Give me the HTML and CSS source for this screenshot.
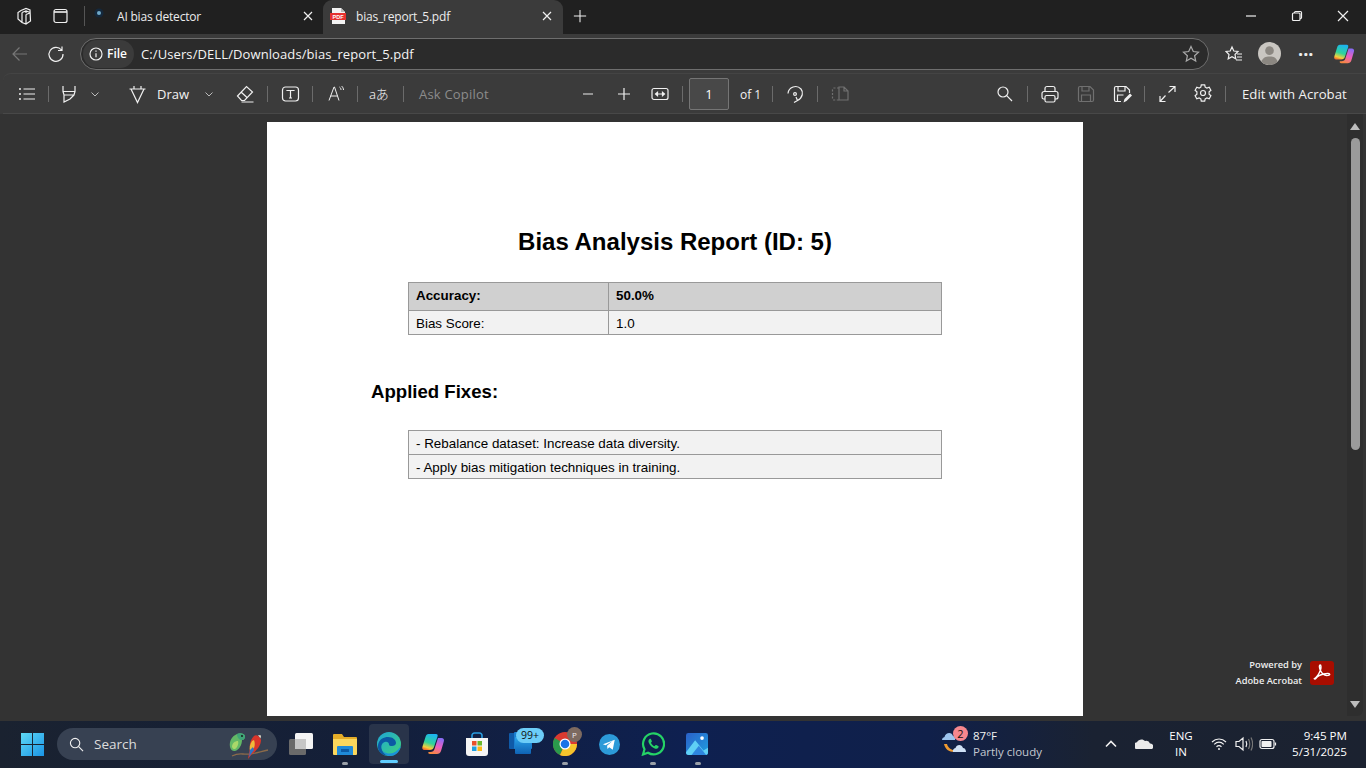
FILE: index.html
```html
<!DOCTYPE html>
<html lang="en">
<head>
<meta charset="utf-8">
<title>bias_report_5.pdf</title>
<link rel="stylesheet" href="styles.css">
</head>
<body>
<svg class="defs" width="0" height="0" aria-hidden="true">
  <defs>
    <linearGradient id="cpA" x1="0.6" y1="0" x2="0.3" y2="1"><stop offset="0" stop-color="#1cb4f0"/><stop offset=".55" stop-color="#2fd49a"/><stop offset=".85" stop-color="#f4d03c"/><stop offset="1" stop-color="#f2702f"/></linearGradient>
    <linearGradient id="cpB" x1="0.7" y1="0" x2="0.3" y2="1"><stop offset="0" stop-color="#8a6cf5"/><stop offset=".5" stop-color="#ee5fc0"/><stop offset="1" stop-color="#f6893c"/></linearGradient>
    <linearGradient id="win" x1="0" y1="0" x2="1" y2="1"><stop offset="0" stop-color="#5fd9f5"/><stop offset="1" stop-color="#1a94e6"/></linearGradient>
    <linearGradient id="edg" x1="0" y1="0" x2="1" y2="1"><stop offset="0" stop-color="#1ea6d8"/><stop offset="1" stop-color="#3fd27a"/></linearGradient>
    <linearGradient id="pho" x1="0" y1="0" x2="1" y2="1"><stop offset="0" stop-color="#2a60c8"/><stop offset="1" stop-color="#1f9fe0"/></linearGradient>
    <linearGradient id="olk" x1="0" y1="0" x2="0" y2="1"><stop offset="0" stop-color="#2aa4ea"/><stop offset="1" stop-color="#0f62b4"/></linearGradient>
    <symbol id="copilot" viewBox="0 0 24 24">
      <path d="M7.500 2H15c1.500 0 2 1 1.500 2.500L13 15c-.6 1.800-2 3-4 3H3.500C1.500 18 .8 16.500 1.500 14.500L4.500 5C5 3 6 2 7.500 2z" fill="url(#cpA)"/>
      <path d="M17 6h3.500c2 0 3 1.500 2.300 3.500L20 19c-.6 2-2 3-4 3H9c-1.500 0-2-1-1.500-2h2c2 0 3.500-1 4-3L17 6z" fill="url(#cpB)"/>
    </symbol>
  </defs>
</svg>

<div class="tabstrip">
  <svg class="ico tabs-ico" viewBox="0 0 20 20"><path d="M6 4.500 11 2.500 15 4 15.500 15 11 18 7 16.500 3 13V6.500z M7 6.500 11 5 15 6.500 M7 6.500V16.500 M11 5V7 M11 8.500 15 7 M11 8.500V18"/></svg>
  <svg class="ico tab-panel" viewBox="0 0 20 20"><rect x="3" y="3.500" width="13" height="13" rx="2"/><path class="thick" d="M3 6h13"/></svg>
  <span class="tab-sep"></span>
  <div class="tab">
    <svg class="favicon" viewBox="0 0 12 12"><circle cx="5" cy="5" r="4.500" fill="#14283c"/><circle cx="5" cy="5" r="2" fill="#6fa8c8"/></svg>
    <span class="tab-title">AI bias detector</span>
    <svg class="ico tab-x" viewBox="0 0 12 12"><path d="M2 2l8 8M10 2l-8 8"/></svg>
  </div>
  <div class="tab tab-active">
    <svg class="favicon-pdf" viewBox="0 0 16 16"><path d="M2 0h9l4 4v12H2z" fill="#f4f4f4"/><path d="M11 0l4 4h-4z" fill="#bbb"/><rect x="0" y="5" width="16" height="7" fill="#e5312f"/><text x="8" y="11" class="pdf-mini">PDF</text></svg>
    <span class="tab-title">bias_report_5.pdf</span>
    <svg class="ico tab-x" viewBox="0 0 12 12"><path d="M2 2l8 8M10 2l-8 8"/></svg>
  </div>
  <svg class="ico tab-plus" viewBox="0 0 16 16"><path d="M8 1v14M1 8h14"/></svg>
  <div class="win-controls">
    <svg class="ico" viewBox="0 0 12 12"><path d="M1 6h10"/></svg>
    <svg class="ico" viewBox="0 0 12 12"><rect x="1.500" y="3" width="7.500" height="7.500" rx="1"/><path d="M3.500 3V2.500c0-.6.4-1 1-1h5c.6 0 1 .4 1 1v5c0 .6-.4 1-1 1H9"/></svg>
    <svg class="ico" viewBox="0 0 12 12"><path d="M1 1l10 10M11 1 1 11"/></svg>
  </div>
</div>

<div class="addressrow">
  <svg class="ico back" viewBox="0 0 18 18"><path d="M16 9H2M8.500 2.500 2 9l6.500 6.500"/></svg>
  <svg class="ico reload" viewBox="0 0 18 18"><path d="M14.500 5A7 7 0 1 0 16 9M15 1.500V5.500H11"/></svg>
  <div class="omnibox">
    <div class="chip">
      <svg class="ico info" viewBox="0 0 14 14"><circle cx="7" cy="7" r="6"/><path d="M7 6.200v4M7 3.500v1.300"/></svg>
      <span class="chip-text">File</span>
    </div>
    <span class="url">C:/Users/DELL/Downloads/bias_report_5.pdf</span>
    <svg class="ico star" viewBox="0 0 18 18"><path d="M9 1.500l2.300 5 5.200.6-3.900 3.600 1.100 5.300L9 13.300 4.300 16l1.100-5.300L1.500 7.100l5.200-.6z"/></svg>
  </div>
  <svg class="ico favs" viewBox="0 0 18 18"><path d="M7 2l1.800 4 4.200.5-3 3 .8 4.300L7 11.700 3.200 13.800 4 9.500 1 6.500 5.200 6zM12 9h5M12 12h5M11 15h6"/></svg>
  <svg class="avatar" viewBox="0 0 24 24"><circle cx="12" cy="12" r="12" fill="#c9c6c1"/><circle cx="12" cy="9" r="4.500" fill="#8b8781"/><path d="M3.500 20.500C5 16 8 15 12 15s7 1 8.500 5.500A12 12 0 0 1 3.500 20.500z" fill="#8b8781"/></svg>
  <span class="more">···</span>
  <svg class="cp-top"><use href="#copilot"/></svg>
</div>

<div class="toolbar-wrap">
<div class="toolbar">
  <svg class="ico ti" viewBox="0 0 20 20"><path d="M6.500 5H18M6.500 10H18M6.500 15H18"/><path class="thick" d="M2 5h2M2 10h2M2 15h2"/></svg>
  <span class="sep m11"></span>
  <svg class="ico ti m10" viewBox="0 0 20 20"><path d="M4 2v5.500h12V2M4 7.500 5 11h10l1-3.500M5 11v7l6-3 4-4"/></svg>
  <svg class="ico chev m11" viewBox="0 0 10 10"><path d="M1.500 3.500 5 7l3.500-3.500"/></svg>
  <svg class="ico ti m27" viewBox="0 0 20 20"><path d="M2.500 5h16M4 5l6.500 13.500L17 5M7 5V2M14 5V2"/></svg>
  <span class="tb-text draw m10">Draw</span>
  <svg class="ico chev m15" viewBox="0 0 10 10"><path d="M1.500 3.500 5 7l3.500-3.500"/></svg>
  <svg class="ico ti m21" viewBox="0 0 20 20"><path d="M2.500 12 11.500 2.500l6 5.500-8 8.500H6.500zM6 8l6 5.500M6.500 18h12"/></svg>
  <span class="sep m12"></span>
  <svg class="ico ti m12" viewBox="0 0 20 20"><rect x="2.500" y="3" width="16" height="14" rx="3"/><path d="M7 7V6.500h7V7M10.500 6.500v7.500M9 14h3"/></svg>
  <span class="sep m12"></span>
  <svg class="ico ti m12 read" viewBox="0 0 20 20"><path d="M4 16.500 9 3h.5l4.500 13.500M5.500 12h7M14.500 3c1 .8 1.500 1.800 1.500 3M16.500 2c1.200 1 2 2.400 2 4"/></svg>
  <span class="sep m12"></span>
  <span class="tb-text trans m11">aあ</span>
  <span class="sep m14"></span>
  <span class="tb-text ask m15">Ask Copilot</span>
  <svg class="ico ti m87 dim-line" viewBox="0 0 20 20"><path d="M5 10h10"/></svg>
  <svg class="ico ti m16" viewBox="0 0 20 20"><path d="M10 4v12M4 10h12"/></svg>
  <svg class="ico ti m16" viewBox="0 0 20 20"><rect x="2" y="4.500" width="16" height="11" rx="2"/><path d="M5 10h10M5.500 10l2-1.700v3.400zM14.500 10l-2-1.700v3.400z"/></svg>
  <span class="sep m12"></span>
  <div class="pagebox m6">1</div>
  <span class="tb-text of1 m11">of 1</span>
  <span class="sep m12"></span>
  <svg class="ico ti m12" viewBox="0 0 20 20"><path d="M3 9.500A7.500 7.500 0 0 1 16 5c2.500 3 2 8.500-3.500 11.500M9 18.500l3.500-2-1.500-3.500"/><circle cx="10" cy="10" r="1.400"/></svg>
  <span class="sep m12"></span>
  <svg class="ico ti m12 dim" viewBox="0 0 20 20"><path stroke-dasharray="2 1.500" d="M9 4H4a1.500 1.500 0 0 0-1.500 1.500v9A1.500 1.500 0 0 0 4 16h5"/><path d="M9 3h5l4 4v9H9zM14 3v4h4"/></svg>

  <svg class="ico ti right" viewBox="0 0 20 20"><circle cx="8" cy="8" r="5"/><path d="M11.700 11.700 17 17"/></svg>
  <span class="sep m12"></span>
  <svg class="ico ti m12" viewBox="0 0 20 20"><path d="M5 8V4.500A2 2 0 0 1 7 2.500h6a2 2 0 0 1 2 2V8M5 15H3.500A2 2 0 0 1 2 13V9.500a2 2 0 0 1 2-2h12a2 2 0 0 1 2 2V13a2 2 0 0 1-2 2H15"/><rect x="5" y="11.500" width="10" height="6.500" rx="1.500"/></svg>
  <svg class="ico ti m16 dim" viewBox="0 0 20 20"><path d="M2.500 4A1.500 1.500 0 0 1 4 2.500h10L17.500 6v10a1.500 1.500 0 0 1-1.500 1.500H4A1.500 1.500 0 0 1 2.500 16zM6 2.500V7h7V2.500M5.500 17.500V11h9v6.500"/></svg>
  <svg class="ico ti m16" viewBox="0 0 20 20"><path d="M9 17.500H4A1.500 1.500 0 0 1 2.500 16V4A1.500 1.500 0 0 1 4 2.500h10L17.500 6v3M6 2.500V7h7V2.500M5.500 17v-6h6"/><path class="solid" d="M11.500 18.500l1-3.500 5.500-5.500 2 2-5.500 5.500z"/></svg>
  <span class="sep m12"></span>
  <svg class="ico ti m12" viewBox="0 0 20 20"><path d="M11.500 8.500 18 2.500M12.500 2.500H18V8M8.500 11.500 3 17.500M3 12v5.500H8.500"/></svg>
  <svg class="ico ti m16 gear" viewBox="0 0 20 20"><path d="M8.300 1.800h3.400l.5 2.400 1.700.9 2.300-.8 1.700 3-1.800 1.500v2.400l1.800 1.500-1.700 3-2.300-.8-1.700.9-.5 2.400H8.300l-.5-2.400-1.700-.9-2.300.8-1.700-3 1.800-1.500V8.800L2.100 7.300l1.700-3 2.300.8 1.700-.9z"/><circle cx="10" cy="10" r="2.500"/></svg>
  <span class="sep m12"></span>
  <span class="tb-text edit m16">Edit with Acrobat</span>
</div>
</div>

<div class="viewer">
  <div class="canvas">
    <div class="page">
      <h1 class="title">Bias Analysis Report (ID: 5)</h1>
      <table class="grid">
        <tr class="head"><td class="c1">Accuracy:</td><td>50.0%</td></tr>
        <tr class="row2"><td class="c1">Bias Score:</td><td>1.0</td></tr>
      </table>
      <h2 class="subtitle">Applied Fixes:</h2>
      <table class="grid fixes">
        <tr><td>- Rebalance dataset: Increase data diversity.</td></tr>
        <tr><td>- Apply bias mitigation techniques in training.</td></tr>
      </table>
    </div>
  </div>
  <div class="scrollbar">
    <span class="arrow-up"></span>
    <span class="thumb"></span>
    <span class="arrow-down"></span>
  </div>
  <div class="powered">
    <div class="powered-text"><span>Powered by</span><span>Adobe Acrobat</span></div>
    <svg class="acro" viewBox="0 0 24 24"><rect width="24" height="24" rx="3" fill="#a80d00"/><path d="M4 18c2.500-1.500 5-5 6.500-9 .7-2 .7-5-.3-5-1.100 0-1 2.600 0 5 1.500 3.300 4 5.500 6.500 5.500 2 0 3.300-.5 3-1.300-.4-.9-3-.9-6-.2-3 .7-6 2-7.500 4-1 1.300-2 1.500-2 .2" fill="none" stroke="#fff" stroke-width="1.400"/></svg>
  </div>
</div>

<div class="taskbar">
  <svg class="start" viewBox="0 0 24 24"><path fill="url(#win)" d="M0 0h11.500v11.500H0zM12.500 0H24v11.500H12.500zM0 12.500h11.500V24H0zM12.500 12.500H24V24H12.500z"/></svg>
  <div class="search">
    <svg class="ico search-ico" viewBox="0 0 16 16"><circle cx="6.500" cy="6.500" r="5"/><path d="M10.300 10.300 15 15"/></svg>
    <span class="search-text">Search</span>
    <svg class="parrots" viewBox="0 0 42 32">
      <path d="M4 28C12 24 14 27 22 26c6-.5 12-3 18-4" stroke="#8a6a4a" stroke-width="1.300" fill="none"/>
      <path d="M2 19C1 13 4 8 9 6c3-1.500 7-1 8 2 .3 2-1 4-3 4 0 5-3 10-7 11-2.500.3-4.500-1.500-5-4z" fill="#62b866"/>
      <path d="M4 19c0-4 3-6 6-6 1 3-1 7-3 8-1.500.3-2.500-.5-3-2z" fill="#a9d86a"/>
      <path d="M9 6c3-1.500 7-1 8 2 .3 2-1 4-3 4-2 .5-5-2-5-6z" fill="#3fa578"/>
      <circle cx="14" cy="8" r=".9" fill="#111"/>
      <path d="M26 8c-3 3-5 8-4 12l-2 11 4-5c4-3 9-8 9-14-1-4-5-6-7-4z" fill="#d8352a"/>
      <path d="M24 13c-2 3-3 7-2 10l4-3c1-3 1-5 0-8z" fill="#f0b93a"/>
      <path d="M22 22l3-3 1 3-5 7z" fill="#2a74c8"/>
      <path d="M30 7l3 .5-.5 3z" fill="#e9e2d0"/>
    </svg>
  </div>
  <svg class="tk taskview" viewBox="0 0 24 24"><rect x="6" y="1" width="18" height="16" rx="1.500" fill="#f4f4f4"/><rect x="0" y="7" width="17" height="16" rx="1.500" fill="#6a6a6a"/><rect x="6" y="7" width="11" height="10" fill="#c6c6c6"/></svg>
  <div class="tkitem explorer">
    <svg class="tk" viewBox="0 0 24 24"><path d="M0 3a1 1 0 0 1 1-1h8l2 3h12a1 1 0 0 1 1 1v16H0z" fill="#e5ad28"/><path d="M0 7h24v15a1 1 0 0 1-1 1H1a1 1 0 0 1-1-1z" fill="#fbd75c"/><path d="M5 14h14a1 1 0 0 1 1 1v8H4v-8a1 1 0 0 1 1-1z" fill="#1f8ad8"/><rect x="8" y="17" width="8" height="3" fill="#0c5ba6"/></svg>
    <span class="dot"></span>
  </div>
  <div class="tkitem edge">
    <svg class="tk" viewBox="0 0 24 24"><circle cx="12" cy="12" r="12" fill="url(#edg)"/><path d="M1 13C2 7 7 5 11 5c5 0 8 3 8 6 0 2-2 3-4 3-1.500 0-3-.5-3-1.500 0-2-2-3-4-2.500-3 .7-4 3.500-3.500 6.500.5 3 3 6 6.500 7C5 24 0 19 1 13z" fill="#0c59a4"/><path d="M24 14c-1 5-5 10-11 10-3 0-6-2-7-5 2 2 4 2.500 7 2.500 4 0 8-3 11-7.500z" fill="#1a92d8"/></svg>
    <span class="dot active"></span>
  </div>
  <svg class="tk copilot"><use href="#copilot"/></svg>
  <svg class="tk store" viewBox="0 0 24 24"><path d="M7 6V3.500A2.500 2.500 0 0 1 9.500 1h5A2.500 2.500 0 0 1 17 3.500V6" fill="none" stroke="#2a9de0" stroke-width="1.600"/><path d="M1 6h22v15a3 3 0 0 1-3 3H4a3 3 0 0 1-3-3z" fill="#f5f5f5"/><rect x="7" y="9" width="4.500" height="4.500" fill="#e8502c"/><rect x="12.500" y="9" width="4.500" height="4.500" fill="#6bb82c"/><rect x="7" y="14.500" width="4.500" height="4.500" fill="#1e9fe0"/><rect x="12.500" y="14.500" width="4.500" height="4.500" fill="#fdb814"/></svg>
  <div class="outlook">
    <svg class="tk" viewBox="0 0 24 24"><rect x="0" y="1" width="9" height="16" rx="1" fill="#0f5aa8"/><rect x="5" y="0" width="18" height="17" rx="1" fill="#1a7fd0"/><rect x="6" y="5" width="16" height="17" rx="1" fill="url(#olk)"/></svg>
    <span class="badge-99">99+</span>
  </div>
  <div class="tkitem chrome">
    <svg class="tk" viewBox="0 0 24 24"><circle cx="12" cy="12" r="12" fill="#d93a30"/><path d="M12 12 1.600 6A12 12 0 0 0 7 23z" fill="#2a9a4c"/><path d="M12 12h12A12 12 0 0 1 7 23z" fill="#f5c42c"/><circle cx="12" cy="12" r="5.500" fill="#fff"/><circle cx="12" cy="12" r="4.300" fill="#1a73e8"/></svg>
    <span class="avatar-p">P</span>
    <span class="dot"></span>
  </div>
  <svg class="tk telegram" viewBox="0 0 24 24"><circle cx="12" cy="12" r="12" fill="#2c9ad8"/><path d="M4.500 11.800 18 6.500l-2.300 11.500-4-3-2 2-.5-3.500 6.300-5.500-8 4.800z" fill="#fff"/></svg>
  <div class="tkitem whatsapp">
    <svg class="tk" viewBox="0 0 24 24"><path d="M2 22.500l1.500-5.300A10.500 10.500 0 1 1 7 20.800z" fill="none" stroke="#25d366" stroke-width="2.200"/><path d="M8.500 7c-1 .8-1.300 2-.8 3.500 1 2.700 3.500 5.200 6 6 1.500.5 3 .1 3.700-1 .4-.6.300-1.200-.2-1.500l-2-1c-.5-.2-.8 0-1.100.4l-.6.8c-1.600-.6-3-2-3.600-3.500l.7-.7c.3-.3.400-.7.200-1.100l-.9-2C9.600 6.600 9 6.600 8.500 7z" fill="#25d366"/></svg>
    <span class="dot"></span>
  </div>
  <div class="tkitem photos">
    <svg class="tk" viewBox="0 0 24 24"><rect width="24" height="24" rx="2.500" fill="url(#pho)"/><circle cx="17.500" cy="5.500" r="2" fill="#fff"/><path d="M0 21 10 8l9 11 5-3v5a3 3 0 0 1-3 3H3a3 3 0 0 1-3-3z" fill="#5fd0f5"/><path d="M6 24 14 14l8 10z" fill="#2e86de"/></svg>
    <span class="dot"></span>
  </div>
  <div class="weather">
    <div class="weather-icon">
      <svg class="wx" viewBox="0 0 26 26"><path d="M2 13c1 5 5 8 10 8 2 0 3-.5 4-1-6 0-10-3-11-7z" fill="#f09a30"/><path d="M0 9a3 3 0 0 1 2.500-3C3.500 1 10 .5 11 5c1.500 0 2.500 2 2 4z" fill="#9cc4ee"/><path d="M11 21a3 3 0 0 1 2.500-4c1-4 6.500-4 7.500 0 2 0 3 2 3 4z" fill="#cfe0f5"/></svg>
      <span class="wx-badge">2</span>
    </div>
    <div class="wx-text"><span class="temp">87°F</span><span class="cond">Partly cloudy</span></div>
  </div>
  <svg class="ico tray-chev" viewBox="0 0 12 12"><path class="thick" d="M1 8.500 6 3.500l5 5"/></svg>
  <svg class="onedrive" viewBox="0 0 18 12"><path d="M1 11a3.500 3.500 0 0 1 1-6.700C3.500 1 8 .5 10 3a4 4 0 0 1 5 2.500A3 3 0 0 1 17 11z" fill="#eaeaea"/></svg>
  <div class="lang"><span>ENG</span><span>IN</span></div>
  <svg class="ico wifi" viewBox="0 0 16 14"><path d="M1 5c4-4 10-4 14 0M3.200 7.400c3-2.700 6.600-2.700 9.600 0M5.500 9.800c1.600-1.400 3.400-1.400 5 0"/><circle class="solid" cx="8" cy="12" r="1"/></svg>
  <svg class="ico speaker" viewBox="0 0 18 16"><path d="M1 5.500h3L8 2v12l-4-3.500H1zM11 5c1 2 1 4 0 6"/><path class="faint" d="M13.500 3c1.500 3 1.500 7 0 10M16 1.500c2 4 2 9 0 13"/></svg>
  <svg class="ico battery" viewBox="0 0 18 12"><rect x="1" y="1.500" width="14" height="9" rx="2"/><rect class="solid" x="2.500" y="3" width="10" height="6" rx=".8"/><path d="M16.500 4.500v3"/></svg>
  <div class="clock"><span>9:45 PM</span><span>5/31/2025</span></div>
</div>
</body>
</html>
```

FILE: styles.css
```css
* { box-sizing: border-box; }
html, body { margin: 0; padding: 0; width: 1366px; height: 768px; overflow: hidden; }
body { display: flex; flex-direction: column; background: #333; color: #fff; font-family: "Open Sans", "Liberation Sans", sans-serif; font-size: 12px; }
.defs { position: absolute; }

.ico { fill: none; stroke: #f0f0f0; stroke-width: 1.200; flex: none; display: block; }
.ico .thick { stroke-width: 1.600; }
.ico .solid { fill: #f0f0f0; stroke: none; }
.ico .faint { stroke: #777; }

/* tab strip */
.tabstrip { height: 34px; flex: none; display: flex; align-items: center; background: #202020; padding-bottom: 2px; }
.tabs-ico { width: 20px; height: 20px; margin-left: 15px; }
.tab-panel { width: 20px; height: 20px; margin-left: 16px; }
.tab-sep { width: 1px; height: 20px; background: #555; margin-left: 13px; }
.tab { height: 34px; display: flex; align-items: center; width: 237px; margin: 0 0 -2px 1px; padding-bottom: 2px; flex: none; }
.favicon { width: 12px; height: 12px; margin-left: 8px; margin-top: -4px; }
.tab-title { font-size: 12px; color: #ececec; letter-spacing: -.2px; }
.favicon + .tab-title { margin-left: 11px; }
.tab-x { width: 12px; height: 12px; margin-left: auto; margin-right: 9px; }
.tab-active { width: 240px; margin-left: 0; background: #3b3b3b; border-radius: 9px 9px 0 0; }
.favicon-pdf { width: 16px; height: 16px; margin-left: 7px; }
.pdf-mini { font-size: 5.500px; font-weight: 700; fill: #fff; text-anchor: middle; font-family: "Liberation Sans", sans-serif; }
.favicon-pdf + .tab-title { margin-left: 10px; }
.tab-active .tab-x { margin-right: 10px; }
.tab-plus { width: 14px; height: 14px; margin-left: 10px; }
.win-controls { margin-left: auto; display: flex; gap: 34px; margin-right: 17px; }
.win-controls .ico { width: 12px; height: 12px; }

/* address row */
.addressrow { height: 39px; flex: none; display: flex; align-items: center; background: #3b3b3b; }
.back { width: 18px; height: 18px; margin-left: 11px; stroke: #777; }
.reload { width: 18px; height: 18px; margin-left: 18px; }
.omnibox { width: 1129px; height: 32px; margin-left: 15px; border: 1px solid #6e6e6e; border-radius: 16px; background: #2b2b2b; display: flex; align-items: center; flex: none; }
.chip { height: 28px; width: 51px; margin-left: 2px; display: flex; align-items: center; border-radius: 14px; background: #3b3b3b; flex: none; }
.info { width: 14px; height: 14px; margin-left: 6px; }
.chip-text { font-size: 12px; font-weight: 600; margin-left: 4px; }
.url { font-size: 13px; margin-left: 7px; color: #f4f4f4; letter-spacing: .1px; white-space: nowrap; }
.star { width: 18px; height: 18px; margin-left: auto; margin-right: 8px; stroke: #aaa; }
.favs { width: 18px; height: 18px; margin-left: 16px; }
.avatar { width: 23px; height: 23px; margin-left: 15px; flex: none; }
.more { font-size: 18px; font-weight: 700; margin-left: 17px; line-height: 1; color: #eee; width: 16px; }
.cp-top { width: 22px; height: 22px; margin-left: 19px; flex: none; }

/* pdf toolbar */
.toolbar-wrap { height: 41px; flex: none; padding-left: 3px; background: #3b3b3b; }
.toolbar { height: 41px; display: flex; align-items: center; padding-left: 14px; padding-right: 18px; background: #3b3b3b; border-radius: 8px 0 0 0; border-top: 1px solid #444; border-bottom: 1px solid #484848; }
.ti { width: 20px; height: 20px; }
.gear { margin-top: -2px; }
.read { stroke-width: 1; }
.chev { width: 10px; height: 10px; stroke: #bbb; stroke-width: 1; }
.sep { width: 1px; height: 16px; background: #6b6b6b; flex: none; }
.dim { stroke: #707070; }
.dim-line { stroke: #aaa; stroke-width: 1.600; }
.tb-text { font-size: 13px; color: #f2f2f2; white-space: nowrap; flex: none; }
.draw { width: 32px; }
.trans { width: 20px; font-size: 13px; font-weight: 300; letter-spacing: -.3px; font-family: "Noto Sans", "Noto Sans CJK JP", sans-serif; }
.ask { width: 72px; color: #8c8c8c; letter-spacing: .2px; }
.of1 { width: 20px; font-size: 12px; margin-top: 1px; }
.pagebox { width: 40px; height: 32px; flex: none; display: flex; align-items: center; justify-content: center; border: 1px solid #757575; border-radius: 2px; background: #484848; font-size: 13px; }
.edit { width: 106px; font-size: 13.200px; }
.right { margin-left: auto; }
.m6 { margin-left: 6px; }
.m10 { margin-left: 10px; }
.m11 { margin-left: 11px; }
.m12 { margin-left: 12px; }
.m14 { margin-left: 14px; }
.m15 { margin-left: 15px; }
.m16 { margin-left: 16px; }
.m21 { margin-left: 21px; }
.m27 { margin-left: 27px; }
.m87 { margin-left: 87px; }

/* viewer */
.viewer { flex: 1; min-height: 0; display: flex; position: relative; background: #333; overflow: hidden; }
.canvas { flex: 1; margin: 8px 0 5px; padding-left: 267px; overflow: hidden; }
.page { width: 816px; height: 1056px; background: #fff; color: #000; padding-top: 105px; font-family: "Liberation Sans", Arial, sans-serif; }
.title { margin: 0; font-size: 24px; line-height: 30px; font-weight: 700; text-align: center; }
.grid { border-collapse: collapse; width: 534px; margin: 25px 0 0 141px; font-size: 13.400px; table-layout: fixed; }
.grid td { border: 1px solid #999; padding: 1px 7px 0; height: 24px; background: #f2f2f2; color: #000; }
.grid .c1 { width: 200px; }
.grid .head td { background: #d0d0d0; font-weight: 700; height: 28px; padding: 0 7px 3px; }
.subtitle { margin: 45px 0 0 104px; font-size: 18.600px; line-height: 24px; font-weight: 700; }
.fixes { margin-top: 26px; }
.scrollbar { width: 16px; flex: none; margin: 0 3px 5px 0; background: #2e2e2e; border-radius: 0 0 6px 0; display: flex; flex-direction: column; align-items: center; padding: 9px 0 8px; }
.arrow-up { width: 0; height: 0; border: 5px solid transparent; border-top: 0; border-bottom: 7px solid #bdbdbd; }
.thumb { width: 9px; height: 312px; margin-top: 8px; border-radius: 5px; background: #9b9b9b; }
.arrow-down { width: 0; height: 0; margin-top: auto; border: 5px solid transparent; border-bottom: 0; border-top: 7px solid #bdbdbd; }
.powered { position: absolute; right: 32px; top: 545px; display: flex; align-items: center; gap: 8px; }
.powered-text { display: flex; flex-direction: column; align-items: flex-end; gap: 5px; font-size: 9.300px; font-weight: 600; color: #eee; line-height: 11px; }
.acro { width: 24px; height: 24px; flex: none; }

/* taskbar */
.taskbar { height: 47px; flex: none; display: flex; align-items: center; padding-bottom: 1px; background: linear-gradient(90deg, #1a2230 0, #141f38 25%, #0e2050 50%, #10204a 68%, #1a2232 80%, #1b2230 100%); }
.start { width: 23px; height: 23px; margin-left: 21px; flex: none; }
.search { width: 220px; height: 32px; margin-left: 13px; display: flex; align-items: center; border-radius: 16px; background: #374152; flex: none; }
.search-ico { width: 15px; height: 15px; margin-left: 12px; }
.search-text { margin-left: 10px; font-size: 13.500px; color: #ddd; }
.parrots { width: 42px; height: 32px; margin-left: auto; margin-right: 7px; flex: none; }
.tk { width: 24px; height: 24px; display: block; flex: none; }
.taskview { margin-left: 12px; }
.tkitem { position: relative; width: 24px; height: 24px; flex: none; }
.explorer { margin-left: 20px; }
.dot { position: absolute; left: 9px; bottom: -9px; width: 6px; height: 3px; border-radius: 2px; background: #9aa0a8; }
.edge { margin-left: 20px; }
.edge::before { content: ""; position: absolute; inset: -8px; border-radius: 4px; background: #29344a; }
.edge .tk { position: relative; }
.edge .dot.active { left: 3px; width: 18px; background: #60cdff; bottom: -7px; }
.copilot { margin-left: 20px; }
.store { margin-left: 20px; }
.outlook { position: relative; margin-left: 20px; width: 24px; height: 24px; flex: none; }
.badge-99 { position: absolute; left: 7px; top: -4px; width: 28px; height: 15px; border-radius: 8px; background: #6ccdf8; color: #111; font-size: 10.500px; line-height: 15px; text-align: center; }
.chrome { margin-left: 20px; }
.avatar-p { position: absolute; left: 14px; top: -5px; width: 15px; height: 15px; border-radius: 50%; background: #7d6a60; color: #eee; font-size: 8px; line-height: 15px; text-align: center; }
.telegram { margin-left: 22px; width: 21px; height: 21px; }
.whatsapp { margin-left: 21px; }
.photos { margin-left: 21px; width: 22px; }
.photos .tk { width: 22px; height: 22px; margin-top: 1px; }
.weather { display: flex; align-items: center; margin-left: 234px; flex: none; }
.weather-icon { position: relative; width: 26px; height: 26px; flex: none; }
.wx { width: 26px; height: 26px; display: block; }
.wx-badge { position: absolute; left: 11px; top: -5px; width: 15px; height: 15px; border-radius: 50%; background: #f6878e; color: #111; font-size: 11px; line-height: 15px; text-align: center; }
.wx-text { display: flex; flex-direction: column; margin-left: 5px; font-size: 11.500px; line-height: 16px; width: 69px; white-space: nowrap; }
.temp { color: #f2f2f2; }
.cond { color: #c4c8d0; }
.tray-chev { width: 12px; height: 12px; margin-left: 63px; }
.onedrive { width: 18px; height: 12px; margin-left: 18px; flex: none; }
.lang { display: flex; flex-direction: column; align-items: center; width: 32px; margin-left: 12px; font-size: 11.500px; line-height: 16px; flex: none; }
.wifi { width: 16px; height: 14px; margin-left: 14px; }
.speaker { width: 18px; height: 16px; margin-left: 8px; }
.battery { width: 18px; height: 12px; margin-left: 6px; }
.clock { display: flex; flex-direction: column; align-items: flex-end; margin-left: auto; margin-right: 19px; font-size: 11.600px; line-height: 16px; }
```
